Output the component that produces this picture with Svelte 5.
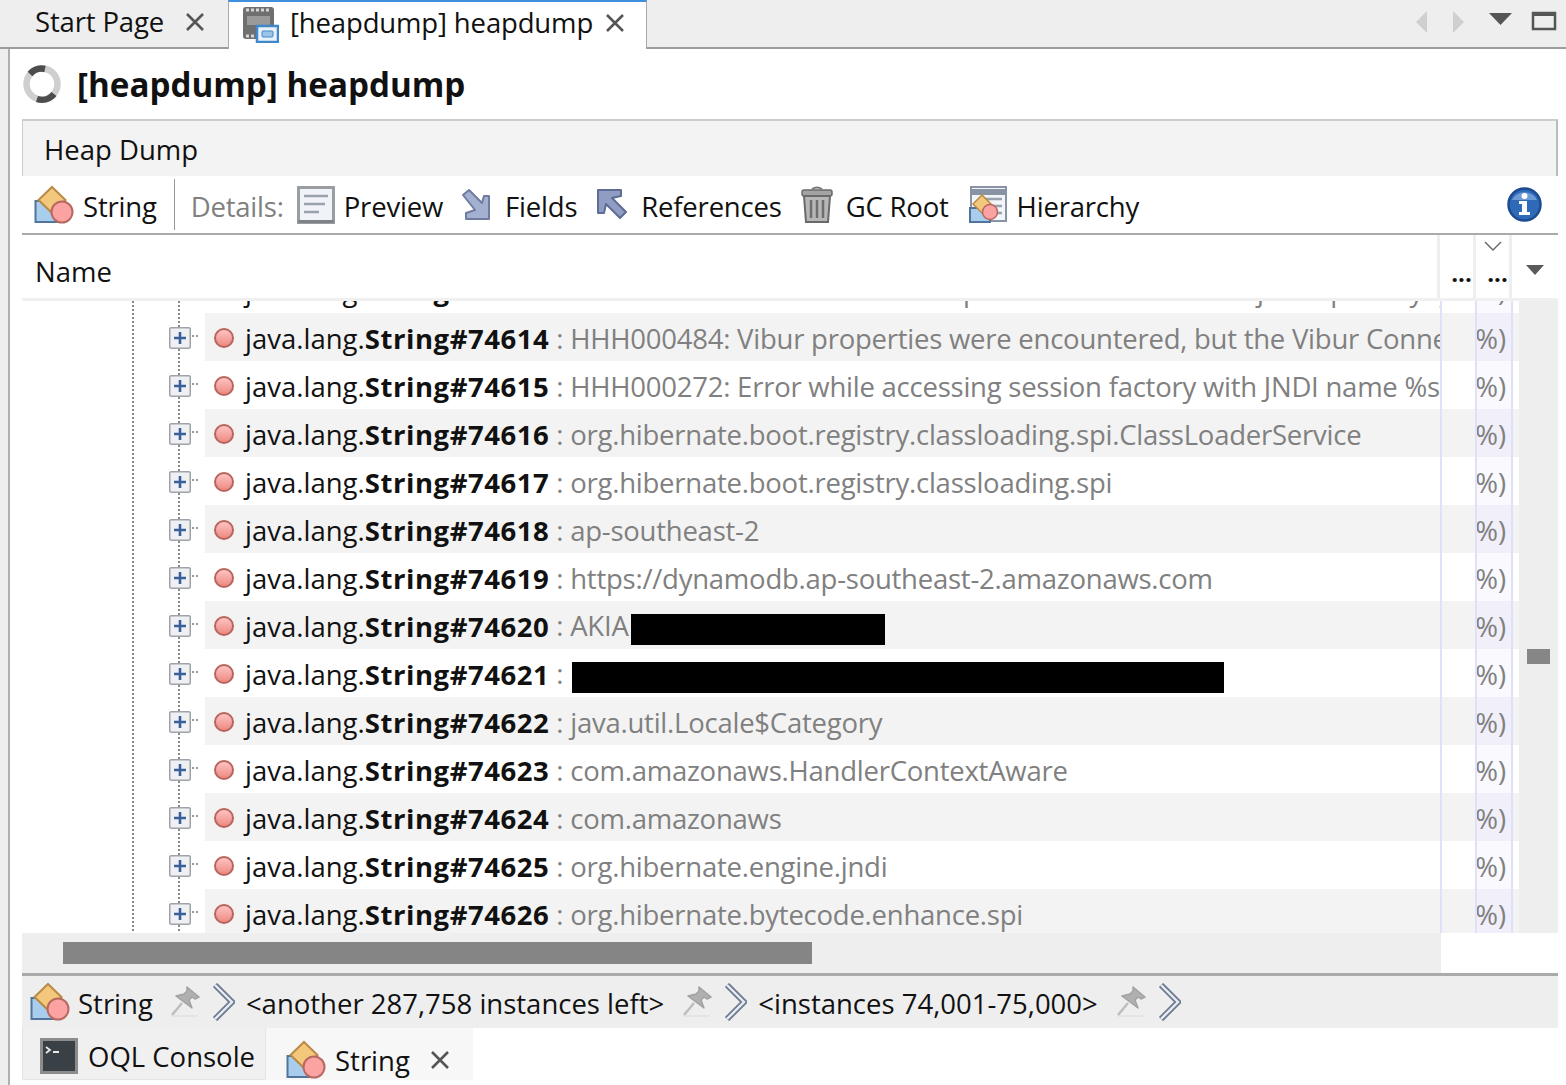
<script>
  const rows = [
    { id: '74613', value: 'HHH000412: Hibernate Core is processed when the object a pool by type' },
    { id: '74614', value: 'HHH000484: Vibur properties were encountered, but the Vibur ConnectionProvider was not found' },
    { id: '74615', value: 'HHH000272: Error while accessing session factory with JNDI name %s' },
    { id: '74616', value: 'org.hibernate.boot.registry.classloading.spi.ClassLoaderService' },
    { id: '74617', value: 'org.hibernate.boot.registry.classloading.spi' },
    { id: '74618', value: 'ap-southeast-2' },
    { id: '74619', value: 'https://dynamodb.ap-southeast-2.amazonaws.com' },
    { id: '74620', value: 'AKIA', redact: 254 },
    { id: '74621', value: '', redact: 652 },
    { id: '74622', value: 'java.util.Locale$Category' },
    { id: '74623', value: 'com.amazonaws.HandlerContextAware' },
    { id: '74624', value: 'com.amazonaws' },
    { id: '74625', value: 'org.hibernate.engine.jndi' },
    { id: '74626', value: 'org.hibernate.bytecode.enhance.spi' }
  ];
  const crumbs = ['<another 287,758 instances left>', '<instances 74,001-75,000>'];
</script>

{#snippet stringIcon()}
  <svg class="ic" width="40" height="40" viewBox="0 0 40 40">
    <rect x="1.5" y="16" width="24" height="21" fill="#a9cdec" stroke="#50749c" stroke-width="2"/>
    <path d="M18 2 L31.5 15 L18 28 L4.5 15 Z" fill="#f3c87c" stroke="#b98a45" stroke-width="2"/>
    <circle cx="28" cy="27" r="10.5" fill="#fba3a3" stroke="#b8685f" stroke-width="2"/>
  </svg>
{/snippet}

{#snippet dot()}
  <svg class="dot" width="22" height="24" viewBox="0 0 22 24">
    <defs><linearGradient id="dg" x1="0" y1="0" x2="0" y2="1"><stop offset="0" stop-color="#fbc9c6"/><stop offset="1" stop-color="#ee8480"/></linearGradient></defs>
    <circle cx="11" cy="11" r="9" fill="url(#dg)" stroke="#b9635c" stroke-width="2"/>
  </svg>
{/snippet}

{#snippet close()}
  <svg class="x" width="20" height="20" viewBox="0 0 20 20"><path d="M2 2 L18 18 M18 2 L2 18" stroke="#555" stroke-width="2.6" fill="none"/></svg>
{/snippet}

{#snippet pin()}
  <svg class="pin" width="30" height="32" viewBox="0 0 30 32">
    <path d="M2 30 H28" stroke="#e4e4e4" stroke-width="2"/>
    <path d="M12 17 L2 29" stroke="#bdbdbd" stroke-width="2.5"/>
    <path d="M17 1 L29 11 L25 13 L22 11 L19 14 L22 22 L6 10 L14 8 L17 5 Z" fill="#b0b0b0" stroke="#a2a2a2" stroke-width="1.500" stroke-linejoin="round"/>
  </svg>
{/snippet}

{#snippet chevron()}
  <svg class="chev" width="23" height="38" viewBox="0 0 23 38">
    <path d="M3 2 L20 19 L3 36" fill="none" stroke="#6d7a8f" stroke-width="6"/>
    <path d="M3 2 L20 19 L3 36" fill="none" stroke="#e8ecf3" stroke-width="2.4"/>
  </svg>
{/snippet}

<div class="page">
  <header class="tabbar">
    <div class="tab">
      <span class="tabtext">Start Page</span>
      {@render close()}
    </div>
    <div class="tab active">
      <svg width="37" height="40" viewBox="0 0 37 40">
        <rect x="1" y="4" width="31" height="32" rx="3" fill="#6f6f6f"/>
        <path d="M4 7 H29 M4 33 H14" stroke="#d6d6d6" stroke-width="3" stroke-dasharray="3 2"/>
        <rect x="5" y="13" width="23" height="9" fill="#9a9a9a"/>
        <rect x="15" y="23" width="21" height="16" fill="#e9f2fb" stroke="#3f88cc" stroke-width="2.5"/>
        <rect x="20" y="28" width="11" height="6" rx="1" fill="#9cc4e8" stroke="#3f88cc"/>
      </svg>
      <span class="tabtext">[heapdump] heapdump</span>
      {@render close()}
    </div>
    <div class="winctl">
      <svg width="150" height="30" viewBox="0 0 150 30">
        <path d="M13 3 V25 L2 14 Z" fill="#cfcfcf"/>
        <path d="M39 3 V25 L50 14 Z" fill="#cfcfcf"/>
        <path d="M75 5 H98 L86.500 17 Z" fill="#555"/>
        <rect x="119" y="5" width="22" height="16" fill="none" stroke="#555" stroke-width="2.500"/>
        <path d="M118 6 H142" stroke="#555" stroke-width="4"/>
      </svg>
    </div>
  </header>

  <main class="panel">
    <div class="title">
      <svg width="40" height="40" viewBox="0 0 40 40">
        <circle cx="20" cy="20" r="15.500" fill="none" stroke="#cfcfcf" stroke-width="6.500"/>
        <path d="M8 10 A15.500 15.500 0 0 1 23 5" fill="none" stroke="#4d4d4d" stroke-width="6.500"/>
        <path d="M32 30 A15.500 15.500 0 0 1 15 35" fill="none" stroke="#4d4d4d" stroke-width="6.500"/>
      </svg>
      <h1>[heapdump] heapdump</h1>
    </div>

    <div class="section">Heap Dump</div>

    <div class="toolbar">
      <span class="tool tstring">{@render stringIcon()}<span>String</span></span>
      <span class="sep"></span>
      <span class="details">Details:</span>
      <span class="tool preview">
        <svg width="38" height="38" viewBox="0 0 38 38">
          <rect x="1.500" y="1.500" width="35" height="35" fill="#f0f3f7" stroke="#9a9ea3" stroke-width="3"/>
          <path d="M1 35.500 H37" stroke="#808488" stroke-width="3"/>
          <path d="M7 10 H31 M7 18 H28 M7 26 H22" stroke="#9aa2ae" stroke-width="2.500"/>
        </svg>
        <span>Preview</span>
      </span>
      <span class="tool fields">
        <svg width="30" height="32" viewBox="2 0 30 32">
          <path d="M3 6 L9 1 L22 14 L24 7 H29 V30 H6 V24 L15 21 Z" fill="#a4b0d0" stroke="#6f7ca0" stroke-width="2" stroke-linejoin="round"/>
        </svg>
        <span>Fields</span>
      </span>
      <span class="tool refs">
        <svg width="30" height="32" viewBox="0 0 30 32">
          <path d="M1 1 H24 V7 L15 9 L29 23 L23 29 L9 15 L7 24 H1 Z" fill="#8f9dc4" stroke="#5f6d94" stroke-width="2" stroke-linejoin="round"/>
        </svg>
        <span>References</span>
      </span>
      <span class="tool gc">
        <svg width="32" height="38" viewBox="0 0 32 38">
          <path d="M11 3 Q16 0 21 3" fill="none" stroke="#777" stroke-width="2"/>
          <rect x="1" y="4" width="30" height="6" rx="2" fill="#a3a3a3" stroke="#6a6a6a" stroke-width="1.500"/>
          <path d="M3 10 H29 L27 36 H5 Z" fill="#b7b7b7" stroke="#6a6a6a" stroke-width="2"/>
          <path d="M10 14 V32 M16 14 V32 M22 14 V32" stroke="#6e6e6e" stroke-width="2.500"/>
        </svg>
        <span>GC Root</span>
      </span>
      <span class="tool hier">
        <svg width="38" height="38" viewBox="0 0 38 38">
          <rect x="2" y="1" width="35" height="34" fill="#f2f5f9" stroke="#8a93a3" stroke-width="2"/>
          <path d="M2 6 H37" stroke="#8a93a3" stroke-width="6"/>
          <path d="M14 13 H33 M22 20 H33 M28 27 H33" stroke="#9aa2b0" stroke-width="2.500"/>
          <rect x="1" y="22" width="20" height="14" fill="#a9cdec" stroke="#50749c" stroke-width="2"/>
          <path d="M13 9 L22 18 L13 27 L4 18 Z" fill="#f3c87c" stroke="#b98a45" stroke-width="1.500"/>
          <circle cx="21" cy="26" r="7.500" fill="#fba3a3" stroke="#b8685f" stroke-width="1.500"/>
        </svg>
        <span>Hierarchy</span>
      </span>
      <svg class="info" width="35" height="35" viewBox="0 0 35 35">
        <circle cx="17.500" cy="17.500" r="16" fill="#2f6ab8" stroke="#1d4b92" stroke-width="2.500"/>
        <path d="M5 13 A14 14 0 0 1 30 13 Z" fill="#6c9bd6"/>
        <circle cx="17.500" cy="9" r="3" fill="#fff"/>
        <path d="M12 14 H20 V25 H23 V28 H12 V25 H15 V17 H12 Z" fill="#fff"/>
      </svg>
    </div>

    <div class="thead">
      <div class="th name">Name</div>
      <div class="th dots"><span>...</span></div>
      <div class="th dots sorted">
        <svg width="18" height="10" viewBox="0 0 18 10"><path d="M1 1 L9 9 L17 1" fill="none" stroke="#666" stroke-width="1.400"/></svg>
        <span>...</span>
      </div>
      <div class="th menu">
        <svg width="20" height="12" viewBox="0 0 20 12"><path d="M1 1 H19 L10 11 Z" fill="#5a5a5a"/></svg>
      </div>
    </div>

    <div class="tbody">
      <div class="viewport">
        <div class="scroller">
          {#each rows as r, i}
            <div class="row" class:alt={i % 2 === 1}>
              <div class="gutter">
                <span class="plus"><svg width="22" height="22" viewBox="0 0 22 22">
                  <rect x="0.750" y="0.750" width="20.500" height="20.500" rx="1.500" fill="#eef0f4" stroke="#a0a4aa" stroke-width="1.500"/>
                  <path d="M5 11 H17 M11 5 V17" stroke="#3b5f9c" stroke-width="2.600"/>
                </svg></span>
                <span class="hdots"></span>
              </div>
              <div class="cell main">
                {@render dot()}
                <span class="cls">java.lang.<b>String#{r.id}</b></span>
                <span class="val">&nbsp;: {r.value}{#if r.redact}<i class="black" style="width:{r.redact}px"></i>{/if}</span>
              </div>
              <div class="cell c2"></div>
              <div class="cell c3">%)</div>
              <div class="cell c4"></div>
            </div>
          {/each}
        </div>
      </div>
      <div class="vtrack"><div class="vthumb"></div></div>
    </div>

    <div class="hscroll"><div class="htrack"><div class="hthumb"></div></div></div>

    <div class="crumbs">
      <span class="crumb">{@render stringIcon()}<span class="ctxt">String</span></span>
      {@render pin()}{@render chevron()}
      {#each crumbs as c}
        <span class="ctext">{c}</span>
        {@render pin()}{@render chevron()}
      {/each}
    </div>

    <div class="btabs">
      <div class="btab oql">
        <svg width="38" height="36" viewBox="0 0 38 36">
          <rect x="1.500" y="1.500" width="35" height="33" fill="#3a4146" stroke="#8c8c8c" stroke-width="3"/>
          <path d="M6 9 L10 12 L6 15 M13 14 H19" stroke="#e8e8e8" stroke-width="1.800" fill="none"/>
        </svg>
        <span>OQL Console</span>
      </div>
      <div class="btab str">
        {@render stringIcon()}
        <span class="lbl">String</span>
        {@render close()}
      </div>
    </div>
  </main>
</div>

<style>
  :global(body) { margin: 0; background: #fff; }
  .page {
    width: 1566px; height: 1085px; overflow: hidden; background: #eee; color: #111;
    font-family: "Open Sans", "Noto Sans", sans-serif; font-size: 27.500px;
    display: flex; flex-direction: column;
  }
  svg { display: block; flex: none; }

  .tabbar { height: 49px; box-sizing: border-box; display: flex; align-items: stretch; border-bottom: 2px solid #9c9c9c; flex: none; }
  .tab { display: flex; align-items: center; padding: 0 23px 4px 35px; width: 228px; box-sizing: border-box; justify-content: space-between; }
  .tab.active {
    width: 419px; background: #fff; border: 1px solid #aaa; border-top: 2px solid #3f8fe0; border-bottom: none;
    height: 49px; padding: 0 21px 6px 13px; justify-content: flex-start;
  }
  .active .tabtext { margin: 0 auto 0 11px; }
  .tabtext { letter-spacing: -0.15px; }
  .winctl { margin-left: auto; padding: 8px 2px 0 0; }

  .panel {
    flex: 1; margin-left: 8px; background: #fff; border-left: 2px solid #b0b0b0;
    display: flex; flex-direction: column; padding: 0 8px 5px 12px; min-height: 0;
  }
  .title { height: 70px; display: flex; align-items: center; gap: 15px; flex: none; }
  h1 { font-size: 33.200px; font-weight: 700; margin: 0; color: #111; }

  .section {
    height: 57px; box-sizing: border-box; background: #f3f3f3; border-top: 2px solid #ccc; border-left: 1px solid #ccc; border-right: 2px solid #bbb;
    padding: 2px 0 0 21px; display: flex; align-items: center; flex: none;
  }

  .toolbar { height: 59px; box-sizing: border-box; display: flex; align-items: center; border-bottom: 2px solid #aaa; flex: none; letter-spacing: -0.2px; }
  .tool { display: flex; align-items: center; }
  .tool > span, .details { padding-top: 4px; }
  .tstring { margin-left: 12px; gap: 9px; }
  .sep { width: 1px; height: 51px; background: #999; margin: 0 16px 0 17px; }
  .details { color: #808080; margin-right: 13px; }
  .preview { gap: 9px; margin-right: 19px; }
  .fields { gap: 13px; margin-right: 20px; }
  .refs { gap: 14px; margin-right: 19px; }
  .gc { gap: 13px; margin-right: 20px; }
  .hier { gap: 10px; }
  .info { margin-left: auto; margin-right: 16px; }

  .thead { height: 66px; box-sizing: border-box; display: flex; border-bottom: 3px solid #f0f0f0; flex: none; padding-right: 3px; }
  .th { border-right: 3px solid #eeeeee; box-sizing: border-box; }
  .name { width: 1418px; display: flex; align-items: center; padding: 10px 0 0 13px; }
  .dots { width: 36px; display: flex; flex-direction: column; align-items: center; justify-content: flex-end; font-weight: 700; font-size: 24px; line-height: 1; padding-bottom: 13px; }
  .dots span { transform: translateX(5px); }
  .sorted { justify-content: space-between; padding-top: 6px; }
  .menu { flex: 1; border-right: none; display: flex; align-items: center; justify-content: center; padding: 6px 0 0 2px; }

  .tbody { height: 632px; display: flex; flex: none; }
  .viewport { width: 1497px; overflow: hidden; }
  .scroller { margin-top: -36px; }
  .row { height: 48px; display: flex; }
  .gutter {
    width: 183px; flex: none; background:
      repeating-linear-gradient(to bottom, #888 0 2px, transparent 2px 4px) 110px 0 / 2px 100% no-repeat,
      repeating-linear-gradient(to bottom, #888 0 2px, transparent 2px 4px) 156px 0 / 2px 100% no-repeat,
      #fff;
    display: flex; align-items: center; padding: 2px 0 0 147px; box-sizing: border-box;
  }
  .plus { background: #fff; }
  .hdots { width: 8px; height: 2px; margin: 0 0 4px 1px; background: repeating-linear-gradient(to right, #999 0 2px, transparent 2px 4px); }
  .cell { height: 48px; overflow: hidden; }
  .main { width: 1235px; flex: none; display: flex; align-items: center; padding: 2px 0 0 8px; box-sizing: border-box; white-space: nowrap; }
  .dot { margin-right: 10px; margin-top: 2px; }
  .row.alt .cell { background: #f3f3f3; }
  b { font-weight: 700; letter-spacing: 0.56px; }
  .val { color: #808080; letter-spacing: -0.24px; }
  .black { display: inline-block; height: 31px; background: #000; vertical-align: middle; margin-left: 2px; }
  .c2 { width: 35px; flex: none; border-left: 2px solid #dde2f8; box-sizing: border-box; }
  .c3 { width: 36px; flex: none; border-left: 2px solid #dde2f8; box-sizing: border-box; color: #808080; background: #f9f9fe; display: flex; align-items: center; justify-content: flex-end; padding: 3px 5px 0 0; }
  .row.alt .c3 { background: #f1eff9; }
  .c4 { width: 8px; flex: none; border-left: 2px solid #dde2f8; box-sizing: border-box; }

  .vtrack { flex: 1; background: #eee; }
  .vthumb { width: 23px; height: 15px; background: #868686; margin: 348px 0 0 8px; }

  .hscroll { height: 40px; flex: none; }
  .htrack { width: 1419px; height: 40px; background: #eee; padding: 9px 0 0 41px; box-sizing: border-box; }
  .hthumb { width: 749px; height: 22px; background: #858585; }

  .crumbs { height: 55px; box-sizing: border-box; background: #eee; border-top: 3px solid #aaa; display: flex; align-items: center; flex: none; padding-left: 8px; }
  .crumb { display: flex; align-items: center; gap: 8px; margin-right: 17px; }
  .ctxt, .ctext { padding-top: 2px; }
  .chev { margin-left: 12px; }
  .ctext { margin: 0 18px 0 11px; }

  .btabs { height: 52px; display: flex; flex: none; }
  .btab { display: flex; align-items: center; box-sizing: border-box; height: 52px; }
  .oql { width: 244px; background: #f0f0f0; border: 1px solid #e4e4e4; border-top: none; padding: 5px 0 0 17px; gap: 10px; }
  .str { width: 207px; background: #f7f7f7; padding: 12px 0 0 20px; }
  .lbl { margin: 0 20px 0 9px; }
</style>
